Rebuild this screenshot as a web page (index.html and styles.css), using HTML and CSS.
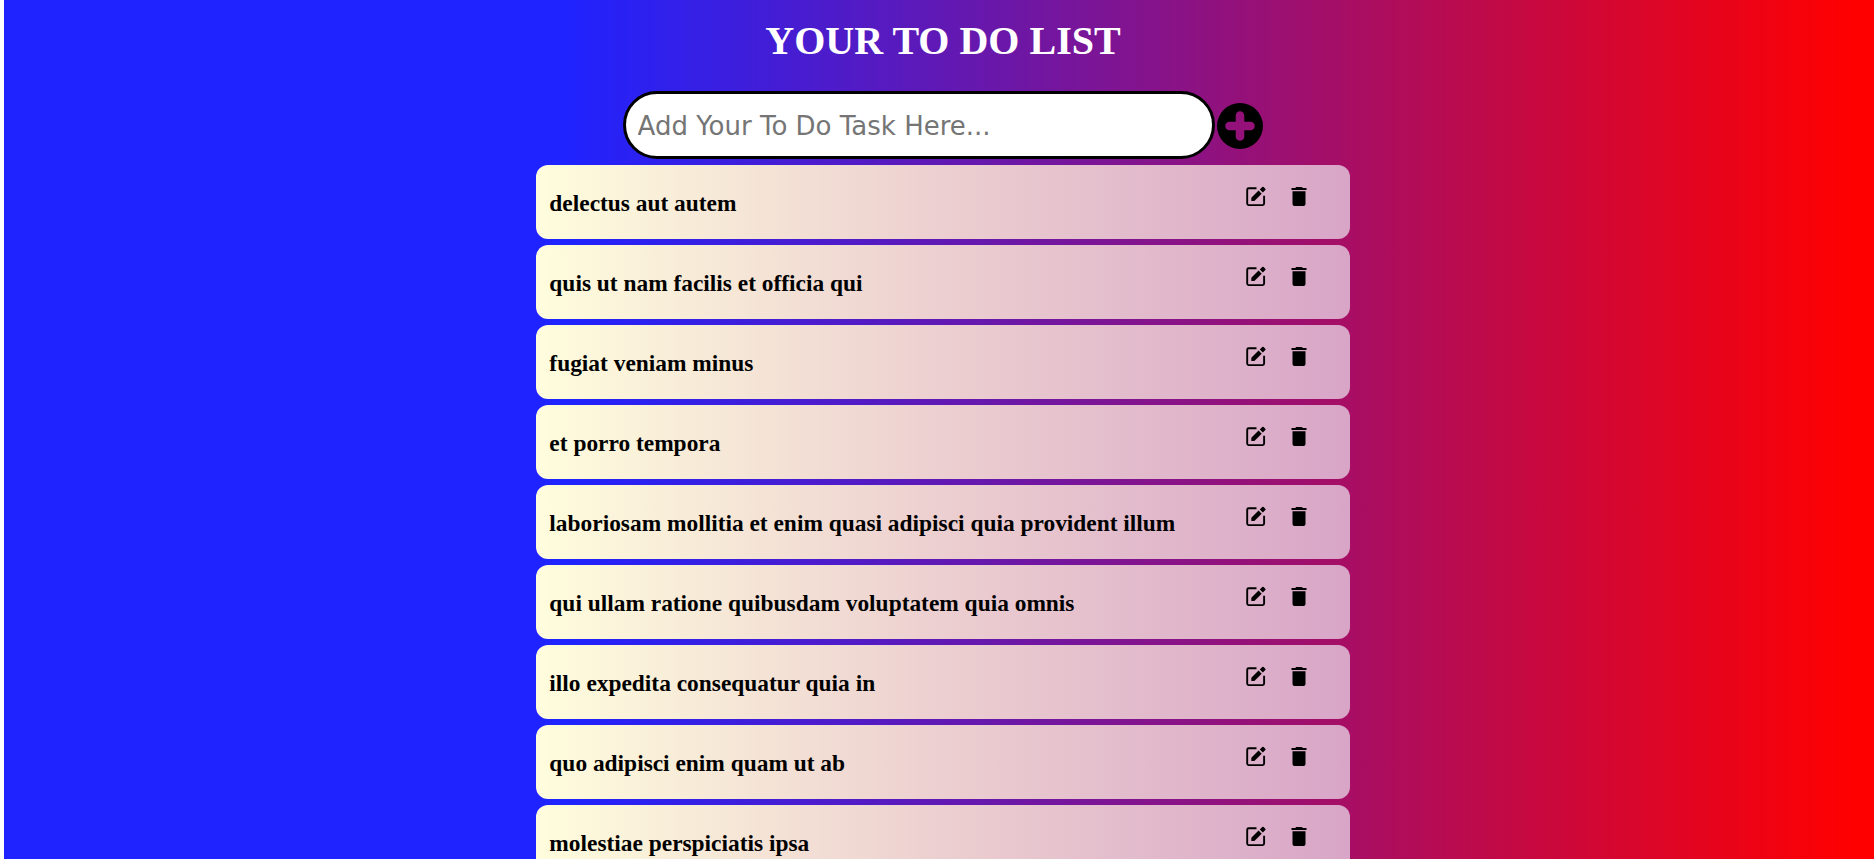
FILE: index.html
```html
<!DOCTYPE html>
<html lang="en">
<head>
<meta charset="utf-8">
<title>Your To Do List</title>
<link rel="stylesheet" href="styles.css">
</head>
<body>
<svg class="sprite" aria-hidden="true">
  <symbol id="edit" viewBox="0 0 24 24">
    <path d="M12.500 3.200H4.700Q3.200 3.200 3.200 4.700V18.600Q3.200 20.100 4.700 20.100H18.600Q20.100 20.100 20.100 18.600V10.700" fill="none" stroke="currentColor" stroke-width="1.900"/>
    <path d="M7.300 16V12.800L14.600 5.600L17.700 8.700L10.400 16Z" fill="currentColor"/>
    <path d="M15.800 4.400L18.200 2Q18.900 1.300 19.600 2L21.300 3.700Q22 4.400 21.300 5.100L18.900 7.500Z" fill="currentColor"/>
  </symbol>
  <symbol id="trash" viewBox="0 0 24 24">
    <path d="M5.500 6.200H18.500V19Q18.500 21 16.500 21H7.500Q5.500 21 5.500 19ZM4.500 3H8.200L9.200 2H14.800L15.800 3H19.500V4.900H4.500Z" fill="currentColor"/>
  </symbol>
</svg>
<main class="page">
  <h1 class="title">YOUR TO DO LIST</h1>
  <form class="add">
    <input class="add-input" type="text" aria-label="New task" placeholder="Add Your To Do Task Here...">
    <button class="add-button" type="button" aria-label="Add task">
      <svg viewBox="0 0 46 46"><path fill="currentColor" fill-rule="evenodd" d="M23 0a23 23 0 1 0 0 46a23 23 0 1 0 0-46zM18.700 12.500a4.300 4.300 0 0 1 8.600 0v6.200h6.200a4.300 4.300 0 0 1 0 8.600h-6.200v6.200a4.300 4.300 0 0 1-8.600 0v-6.200h-6.200a4.300 4.300 0 0 1 0-8.600h6.200z"/></svg>
    </button>
  </form>
  <ul class="list" id="list"></ul>
</main>
<script src="app.js"></script>
</body>
</html>
```
FILE: styles.css
```css
* { box-sizing: border-box; }

body {
  margin: 0;
  height: 100vh;
  overflow: hidden;
  background: #fff;
  font-family: "Liberation Serif", "Times New Roman", serif;
}

.sprite { display: none; }

.page {
  display: flex;
  flex-direction: column;
  align-items: center;
  min-height: 100vh;
  margin-left: 4px;
  padding: 18px 0 0 8px;
  background: linear-gradient(90deg, #1f23ff 30%, #ff0000 99%);
}

.title {
  margin: 0 0 27px;
  color: #fff;
  font-size: 40px;
  line-height: 46px;
}

.add {
  display: flex;
  align-items: center;
  justify-content: center;
  gap: 2px;
  width: 100%;
  margin-bottom: 6px;
}

.add-input {
  width: calc(32% - 3px);
  height: 68px;
  padding: 2px 12px 0;
  border: 3px solid #000;
  border-radius: 34px;
  background: #fff;
  font-family: "DejaVu Sans", sans-serif;
  font-size: 26px;
}

.add-input::placeholder { color: #757575; }

.add-button {
  display: flex;
  width: 46px;
  height: 48px;
  padding: 2px 0 0;
  border: 0;
  background: none;
  color: #000;
}

.list {
  display: flex;
  flex-direction: column;
  gap: 6px;
  width: calc(44% - 6px);
  margin: 0;
  padding: 0;
  font-size: 20px;
  list-style: none;
}

.task {
  display: flex;
  justify-content: space-between;
  align-items: flex-start;
  flex-shrink: 0;
  height: 74px;
  padding: 0 39px 0 13px;
  border-radius: 12px;
  background: linear-gradient(90deg, #fffddd, #eccfd0 50%, #d8a5c7);
}

.task-name {
  margin: 0;
  font-size: 1.17em;
  font-weight: bold;
  line-height: 76px;
}

.actions {
  display: flex;
  gap: 19px;
  padding-top: 20px;
}

.action {
  display: flex;
  width: 24px;
  height: 24px;
  padding: 0;
  border: 0;
  background: none;
  color: #000;
}

.action svg { width: 24px; height: 24px; }
```
FILE: app.js
```js
const tasks = [
  "delectus aut autem",
  "quis ut nam facilis et officia qui",
  "fugiat veniam minus",
  "et porro tempora",
  "laboriosam mollitia et enim quasi adipisci quia provident illum",
  "qui ullam ratione quibusdam voluptatem quia omnis",
  "illo expedita consequatur quia in",
  "quo adipisci enim quam ut ab",
  "molestiae perspiciatis ipsa"
];

const action = (icon, label) =>
  `<button class="action" type="button" aria-label="${label}"><svg><use href="#${icon}"/></svg></button>`;

document.getElementById("list").innerHTML = tasks.map(name =>
  `<li class="task"><h3 class="task-name">${name}</h3><div class="actions">${action("edit", "Edit")}${action("trash", "Delete")}</div></li>`
).join("");
```
